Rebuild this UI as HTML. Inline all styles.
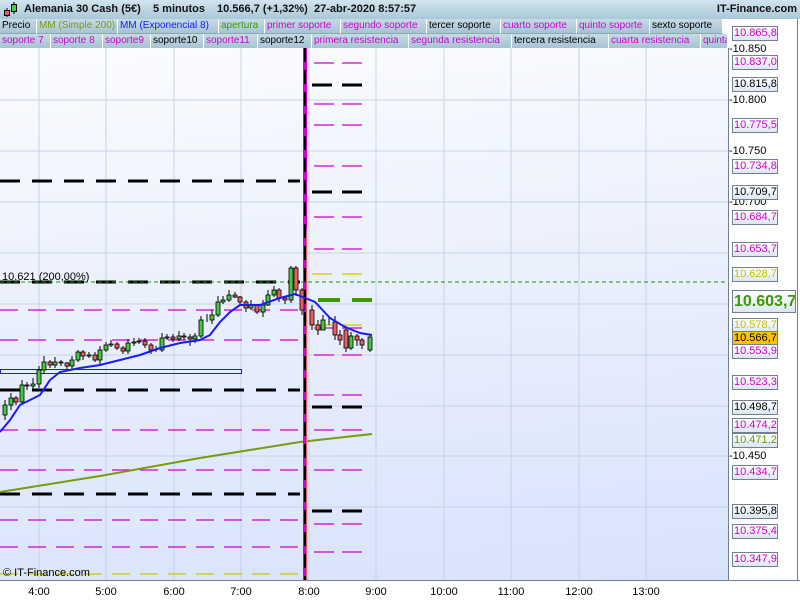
<!DOCTYPE html>
<html><head><meta charset="utf-8"><style>
*{margin:0;padding:0;box-sizing:border-box}
body{width:800px;height:600px;overflow:hidden;background:#fff;font-family:"Liberation Sans",sans-serif;position:relative}
#title{position:absolute;left:0;top:0;width:800px;height:19px;background:linear-gradient(#d2e4ee,#a9c8d8);font-size:11px;font-weight:bold;color:#111}
#title span{position:absolute;top:3px;white-space:nowrap}
.row{position:absolute;left:0;height:15px;width:800px;display:flex;font-size:10px;background:#fff}
.row div{height:15px;line-height:14px;padding-left:2px;background:linear-gradient(#c6dbe6,#a6c3d2);border-right:1px solid #fff;border-bottom:1px solid #8aa;white-space:nowrap;overflow:hidden}
.m{color:#d000d0}.k{color:#000}
#chart{position:absolute;left:0;top:48px;width:728px;height:532px;background:linear-gradient(175deg,#fbfcff 0%,#e8eefc 50%,#d8e3fb 100%);overflow:hidden}
#axis{position:absolute;left:728px;top:48px;width:1px;height:532px;background:#708090}
#bottom{position:absolute;left:0;top:580px;width:800px;height:1px;background:#708090}
.lbl{position:absolute;left:732px;width:46px;height:15px;border:1px solid #708090;background:linear-gradient(#fff,#dde6f2);font-size:11px;line-height:13px;padding-left:1px;white-space:nowrap;overflow:hidden}
.tk{position:absolute;left:729px;font-size:11px;line-height:13px;color:#000}
.t{position:absolute;top:586px;font-size:11px;width:40px;text-align:center}
</style></head><body>
<div id="title">
<svg style="position:absolute;left:3px;top:1px" width="14" height="17"><line x1="4" y1="7" x2="4" y2="16" stroke="#000"/><rect x="1.5" y="9.5" width="5" height="5" fill="#e56" stroke="#000"/><line x1="11" y1="1" x2="11" y2="13" stroke="#000"/><rect x="8.5" y="3.5" width="5" height="7" fill="#4c4" stroke="#000"/></svg>
<span style="left:24px">Alemania 30 Cash (5€)</span><span style="left:153px">5 minutos</span><span style="left:217px">10.566,7 (+1,32%)</span><span style="left:314px">27-abr-2020 8:57:57</span><span style="right:3px">IT-Finance.com</span></div>
<div class="row" style="top:19px">
<div class="k" style="width:37px">Precio</div><div style="width:81px;color:#7a9a10">MM (Simple 200)</div><div style="width:101px;color:#1a1aff">MM (Exponencial 8)</div><div style="width:46px;color:#3a9a00">apertura</div><div class="m" style="width:76px">primer soporte</div><div class="m" style="width:86px">segundo soporte</div><div class="k" style="width:74px">tercer soporte</div><div class="m" style="width:76px">cuarto soporte</div><div class="m" style="width:73px">quinto soporte</div><div class="k" style="width:73px">sexto soporte</div></div>
<div class="row" style="top:34px">
<div class="m" style="width:51px">soporte 7</div><div class="m" style="width:52px">soporte 8</div><div class="m" style="width:48px">soporte9</div><div class="k" style="width:53px">soporte10</div><div class="m" style="width:54px">soporte11</div><div class="k" style="width:54px">soporte12</div><div class="m" style="width:97px">primera resistencia</div><div class="m" style="width:103px">segunda resistencia</div><div class="k" style="width:97px">tercera resistencia</div><div class="m" style="width:92px">cuarta resistencia</div><div class="m" style="width:27px">quinta</div></div>
<div id="chart">
<svg width="728" height="532" style="position:absolute;left:0;top:0">
<g transform="translate(0,-48)" fill="none">
<g stroke="#c8d2e6" stroke-width="1">
<path d="M39 48V580M106 48V580M174 48V580M241 48V580M309 48V580M376 48V580M444 48V580M511 48V580M579 48V580M646 48V580"/>
<path d="M0 100H728M0 151H728M0 202H728M0 253H728M0 304H728M0 355H728M0 406H728M0 456H728M0 507H728"/>
</g>
<g stroke="#d000d0" stroke-width="1.3" stroke-dasharray="18,10">
<path d="M0 310H300M0 340H300M0 430H300M0 470H300M0 520H300M0 547H300"/>
</g>
<path d="M0 574H300" stroke="#d0c800" stroke-width="1.3" stroke-dasharray="18,10"/>
<g stroke="#000" stroke-width="3" stroke-dasharray="20,12">
<path d="M0 181H300M0 282H300M0 390H300M0 494H300"/>
</g>
<path d="M0 282H728" stroke="#1a9a00" stroke-width="1" stroke-dasharray="4,3"/>
<g stroke="#d000d0" stroke-width="1.3" stroke-dasharray="20,8" transform="translate(314,0)">
<path d="M0 63H56M0 104H56M0 125H56M0 166H56M0 217H56M0 249H56M0 328H56M0 355H56M0 395H56M0 430H56M0 470H56M0 524H56M0 552H56"/>
</g>
<g stroke="#000" stroke-width="3" stroke-dasharray="20,10" transform="translate(312,0)">
<path d="M0 85H60M0 192H60M0 407H60M0 511H60"/>
</g>
<g stroke="#d0c800" stroke-width="1.3" stroke-dasharray="20,10" transform="translate(312,0)"><path d="M0 274H60M0 325H60"/></g>
<path d="M318 300H372" stroke="#3a9a00" stroke-width="4" stroke-dasharray="22,12"/>
<rect x="0.5" y="369.5" width="241" height="4" stroke="#1a1aff"/>
<path d="M0 492L100 476L200 458L300 442L372 434" stroke="#7a9a10" stroke-width="2"/>
<path d="M305 48V580" stroke="#d000d0" stroke-width="4"/>
<path d="M305 48V580" stroke="#000" stroke-width="2" stroke-dasharray="14,8"/>
<path d="M307 230V580" stroke="#d0c800" stroke-width="1"/>
<g stroke="#000" stroke-width="1">
<path d="M5 420V400M11 410V393M16 396V405M22 404V380M27 382V390M33 390V378M39 388V366M44 374V356M50 360V368M55 368V357M61 360V366M67 362V370M72 370V356M78 362V350M83 350V360M89 358V352M95 352V362M100 364V346M106 352V342M111 347V340M117 342V350M123 346V354M128 354V339M134 346V338M139 344V338M145 338V348M151 343V354M156 346V352M162 352V333M167 340V334M173 334V342M179 341V331M184 333V340M190 334V346M195 343V333M201 338V316M207 322V314M212 324V310M218 317V296M223 304V296M229 302V290M235 298V292M240 296V305M246 300V312M251 310V300M257 304V314M263 317V300M268 306V290M274 297V286M279 288V302M285 296V304M291 303V266M296 266V296M302 288V315M312 305V330M318 320V335M323 330V315M329 318V325M335 316V340M340 330V345M346 326V352M351 350V332M357 334V346M362 338V349M370 352V334"/>
</g>
<g stroke="#000" stroke-width="0.8">
<g fill="#44c844">
<rect x="3" y="405" width="4" height="10"/><rect x="9" y="398" width="4" height="7"/><rect x="20" y="385" width="4" height="17"/><rect x="31" y="384" width="4" height="2"/><rect x="37" y="370" width="4" height="14"/><rect x="42" y="362" width="4" height="8"/><rect x="53" y="362" width="4" height="3"/><rect x="70" y="360" width="4" height="6"/><rect x="76" y="352" width="4" height="8"/><rect x="87" y="355" width="4" height="1"/><rect x="98" y="350" width="4" height="10"/><rect x="104" y="345" width="4" height="5"/><rect x="109" y="344" width="4" height="1"/><rect x="126" y="343" width="4" height="8"/><rect x="132" y="342" width="4" height="1"/><rect x="137" y="341" width="4" height="1"/><rect x="160" y="338" width="4" height="12"/><rect x="165" y="337" width="4" height="1"/><rect x="177" y="336" width="4" height="3"/><rect x="193" y="336" width="4" height="3"/><rect x="199" y="320" width="4" height="16"/><rect x="210" y="315" width="4" height="5"/><rect x="216" y="302" width="4" height="13"/><rect x="221" y="300" width="4" height="2"/><rect x="227" y="295" width="4" height="5"/><rect x="249" y="305" width="4" height="3"/><rect x="261" y="305" width="4" height="7"/><rect x="266" y="295" width="4" height="10"/><rect x="272" y="290" width="4" height="5"/><rect x="289" y="268" width="4" height="32"/><rect x="321" y="320" width="4" height="10"/><rect x="349" y="336" width="4" height="12"/><rect x="368" y="337" width="4" height="13"/>
</g>
<g fill="#e86060">
<rect x="14" y="398" width="4" height="4"/><rect x="25" y="385" width="4" height="1"/><rect x="48" y="362" width="4" height="3"/><rect x="59" y="362" width="4" height="1"/><rect x="65" y="363" width="4" height="3"/><rect x="81" y="352" width="4" height="4"/><rect x="93" y="355" width="4" height="5"/><rect x="115" y="344" width="4" height="4"/><rect x="121" y="348" width="4" height="3"/><rect x="143" y="341" width="4" height="4"/><rect x="149" y="345" width="4" height="5"/><rect x="171" y="337" width="4" height="2"/><rect x="182" y="336" width="4" height="1"/><rect x="188" y="337" width="4" height="2"/><rect x="233" y="295" width="4" height="2"/><rect x="238" y="297" width="4" height="5"/><rect x="244" y="302" width="4" height="6"/><rect x="255" y="305" width="4" height="7"/><rect x="277" y="290" width="4" height="8"/><rect x="283" y="298" width="4" height="2"/><rect x="294" y="268" width="4" height="22"/><rect x="300" y="290" width="4" height="20"/><rect x="310" y="310" width="4" height="15"/><rect x="316" y="325" width="4" height="5"/><rect x="333" y="322" width="4" height="13"/><rect x="338" y="335" width="4" height="5"/><rect x="344" y="330" width="4" height="18"/><rect x="355" y="336" width="4" height="4"/><rect x="360" y="340" width="4" height="5"/>
</g></g>
<path d="M0 432L10 420L20 405L40 395L50 380L60 372L80 368L100 365L120 360L140 355L160 348L180 343L200 340L210 335L220 322L230 312L240 305L260 305L280 298L295 294L305 298L315 302L330 318L345 327L360 333L372 335" stroke="#1a1aff" stroke-width="2"/>
</g></svg>
<div style="position:absolute;left:2px;top:223px;font-size:11px;color:#000">10.621 (200,00%)</div>
<div style="position:absolute;left:3px;top:519px;font-size:11px;color:#000">© IT-Finance.com</div>
</div>
<div id="axis"></div><div id="bottom"></div>
<div style="position:absolute;left:797px;top:19px;width:1px;height:562px;background:#708090"></div>
<div class="tk" style="top:43px">-10.850</div><div class="tk" style="top:94px">-10.800</div><div class="tk" style="top:145px">-10.750</div><div class="tk" style="top:196px">-10.700</div><div class="tk" style="top:450px">-10.450</div>
<div class="lbl m" style="top:26px">10.865,8</div>
<div class="lbl m" style="top:55px">10.837,0</div>
<div class="lbl k" style="top:77px">10.815,8</div>
<div class="lbl m" style="top:118px">10.775,5</div>
<div class="lbl m" style="top:159px">10.734,8</div>
<div class="lbl k" style="top:185px">10.709,7</div>
<div class="lbl m" style="top:210px">10.684,7</div>
<div class="lbl m" style="top:242px">10.653,7</div>
<div class="lbl" style="top:267px;color:#c8c000">10.628,7</div>
<div class="lbl" style="top:290px;width:64px;height:23px;font-size:16px;font-weight:bold;line-height:21px;color:#3a9a00">10.603,7</div>
<div class="lbl" style="top:318px;color:#c8c000">10.578,7</div>
<div class="lbl k" style="top:331px;background:#ffc000">10.566,7</div>
<div class="lbl m" style="top:344px">10.553,9</div>
<div class="lbl m" style="top:375px">10.523,3</div>
<div class="lbl k" style="top:400px">10.498,7</div>
<div class="lbl m" style="top:418px">10.474,2</div>
<div class="lbl" style="top:433px;color:#6a9a00">10.471,2</div>
<div class="lbl m" style="top:465px">10.434,7</div>
<div class="lbl k" style="top:504px">10.395,8</div>
<div class="lbl m" style="top:524px">10.375,4</div>
<div class="lbl m" style="top:552px">10.347,9</div>
<div class="t" style="left:19px">4:00</div><div class="t" style="left:86px">5:00</div><div class="t" style="left:154px">6:00</div><div class="t" style="left:221px">7:00</div><div class="t" style="left:289px">8:00</div><div class="t" style="left:356px">9:00</div><div class="t" style="left:424px">10:00</div><div class="t" style="left:491px">11:00</div><div class="t" style="left:559px">12:00</div><div class="t" style="left:626px">13:00</div>
</body></html>
